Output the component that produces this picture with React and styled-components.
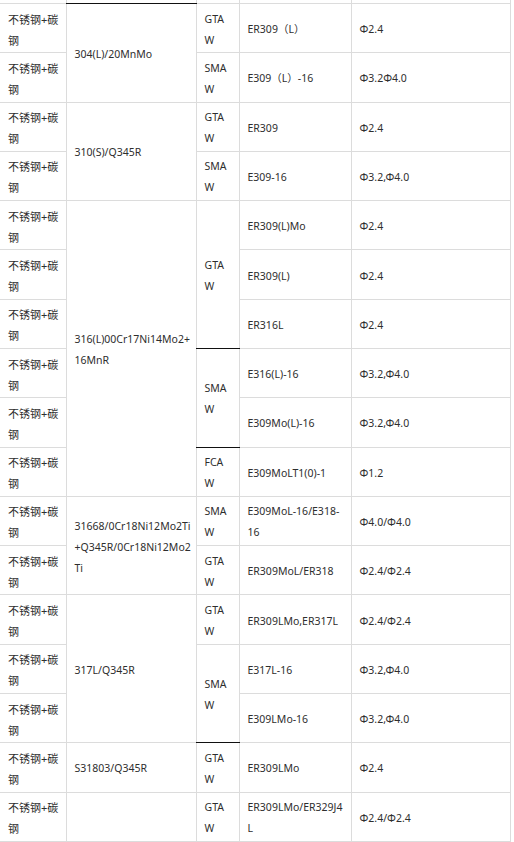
import styled, {createGlobalStyle} from "styled-components";

const GlobalStyle = createGlobalStyle`
  html, body {
    margin: 0;
    padding: 0;
    background: #fff;
  }

  body {
    font-family: "Noto Sans", "Noto Sans CJK SC", sans-serif;
  }
`;

const Sheet = styled.table`
  width: 510px;
  table-layout: fixed;
  border-collapse: collapse;
  font-size: 10.5px;
  line-height: 21px;
  color: #2e2e2e;
`;

const Cell = styled.td`
  border: 1px solid #dcdcdc;
  padding: 4.65px 8px 1.65px;
  vertical-align: middle;
  word-break: break-all;
  ${(p) => p.$dark && "border-top: 1px double #111;"}

  &:first-child {
    border-left: none;
  }
`;

const MaterialCell = styled(Cell)`
  font-size: 11px;
  padding-right: 4px;
`;

const GradeCell = styled(Cell)`
  padding-right: 1px;
`;

const StubCell = styled.td`
  height: 3px;
  padding: 0;
  border: 1px solid #dcdcdc;
  border-top: none;

  &:first-child {
    border-left: none;
  }
`;

const rows = [
  {grade: "304(L)/20MnMo", gradeSpan: 2, dark: true, method: "GTAW", wire: "ER309（L）", size: "Φ2.4"},
  {method: "SMAW", wire: "E309（L）-16", size: "Φ3.2Φ4.0"},
  {grade: "310(S)/Q345R", gradeSpan: 2, method: "GTAW", wire: "ER309", size: "Φ2.4"},
  {method: "SMAW", wire: "E309-16", size: "Φ3.2,Φ4.0"},
  {grade: "316(L)00Cr17Ni14Mo2+16MnR", gradeSpan: 6, method: "GTAW", methodSpan: 3, wire: "ER309(L)Mo", size: "Φ2.4"},
  {wire: "ER309(L)", size: "Φ2.4"},
  {wire: "ER316L", size: "Φ2.4"},
  {method: "SMAW", methodSpan: 2, methodDark: true, wire: "E316(L)-16", size: "Φ3.2,Φ4.0"},
  {wire: "E309Mo(L)-16", size: "Φ3.2,Φ4.0"},
  {method: "FCAW", methodDark: true, wire: "E309MoLT1(0)-1", size: "Φ1.2"},
  {grade: "31668/0Cr18Ni12Mo2Ti+Q345R/0Cr18Ni12Mo2Ti", gradeSpan: 2, method: "SMAW", wire: "E309MoL-16/E318-16", size: "Φ4.0/Φ4.0"},
  {method: "GTAW", wire: "ER309MoL/ER318", size: "Φ2.4/Φ2.4"},
  {grade: "317L/Q345R", gradeSpan: 3, method: "GTAW", wire: "ER309LMo,ER317L", size: "Φ2.4/Φ2.4"},
  {method: "SMAW", methodSpan: 2, wire: "E317L-16", size: "Φ3.2,Φ4.0"},
  {wire: "E309LMo-16", size: "Φ3.2,Φ4.0"},
  {grade: "S31803/Q345R", gradeSpan: 1, method: "GTAW", methodDark: true, wire: "ER309LMo", size: "Φ2.4"},
  {grade: "", gradeSpan: 1, method: "GTAW", wire: "ER309LMo/ER329J4L", size: "Φ2.4/Φ2.4"},
];

export default function App() {
  return (
    <>
      <GlobalStyle />
      <Sheet>
        <colgroup>
          <col style={{width: 66}} />
          <col style={{width: 130}} />
          <col style={{width: 43}} />
          <col style={{width: 112}} />
          <col style={{width: 159}} />
        </colgroup>
        <tbody>
          <tr>
            <StubCell />
            <StubCell />
            <StubCell />
            <StubCell />
            <StubCell />
          </tr>
          {rows.map((row, i) => (
            <tr key={i}>
              <MaterialCell>不锈钢+碳钢</MaterialCell>
              {row.grade !== undefined && (
                <GradeCell rowSpan={row.gradeSpan} $dark={row.dark}>
                  {row.grade}
                </GradeCell>
              )}
              {row.method && (
                <Cell rowSpan={row.methodSpan || 1} $dark={row.methodDark}>
                  {row.method}
                </Cell>
              )}
              <Cell>{row.wire}</Cell>
              <Cell>{row.size}</Cell>
            </tr>
          ))}
        </tbody>
      </Sheet>
    </>
  );
}
